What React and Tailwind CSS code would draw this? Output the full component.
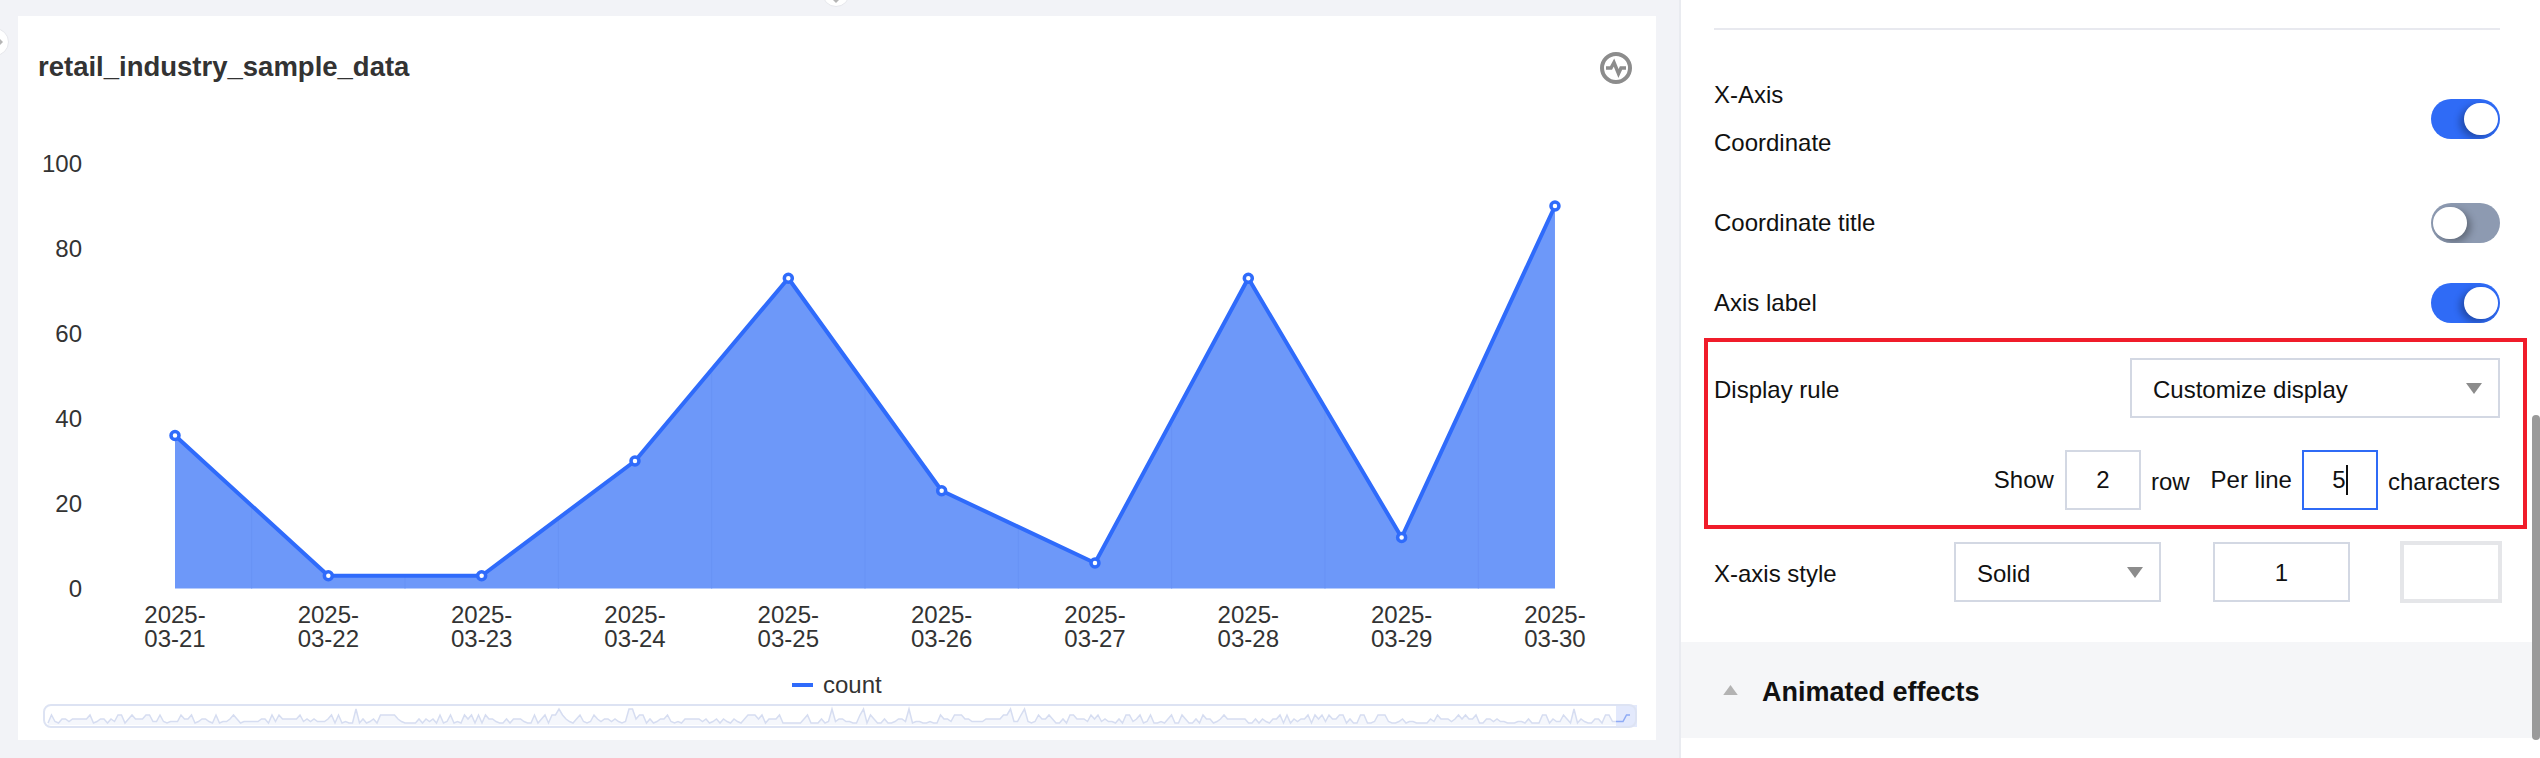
import { Fragment } from 'react';

const values = [36, 3, 3, 30, 73, 23, 6, 73, 12, 90];
const dates = ['03-21', '03-22', '03-23', '03-24', '03-25', '03-26', '03-27', '03-28', '03-29', '03-30'];
const xAt = i => 175 + i * 153.33;
const yAt = v => 588.5 - v * 4.25;
const linePoints = values.map((v, i) => `${xAt(i)},${yAt(v)}`).join(' ');
const areaPoints = `175,588.5 ${linePoints} 1555,588.5`;

// overview line in the data zoom strip
function buildSpark() {
  let seed = 7;
  const rand = () => {
    seed = (seed * 16807) % 2147483647;
    return seed / 2147483647;
  };
  const pts = [];
  for (let x = 48; x <= 1632; x += 3.5) {
    const r = rand();
    const h = r > 0.97 ? 15 : r > 0.8 ? 9 : r > 0.5 ? 5 : r > 0.25 ? 2.5 : 1;
    pts.push(`${x.toFixed(1)},${(724 - h).toFixed(1)}`);
  }
  return pts;
}
const spark = buildSpark();

function Chart() {
  return (
    <svg viewBox="18 100 1638 640" className="block w-[1638px] h-[640px]">
      <defs>
        <clipPath id="area-clip">
          <polygon points={areaPoints} />
        </clipPath>
      </defs>
      <g fontSize="24" fill="#333333" textAnchor="end">
        {[0, 20, 40, 60, 80, 100].map(v => (
          <text key={v} x="82" y={yAt(v) + 8}>{v}</text>
        ))}
      </g>
      <polygon points={areaPoints} fill="#6d98f9" />
      <g clipPath="url(#area-clip)" stroke="#6892f5" strokeWidth="1">
        {values.slice(1).map((_, i) => (
          <line key={i} x1={xAt(i) + 76.67} x2={xAt(i) + 76.67} y1="190" y2="589" />
        ))}
      </g>
      <polyline points={linePoints} fill="none" stroke="#2f6bfb" strokeWidth="4" strokeLinejoin="round" />
      {values.map((v, i) => (
        <circle key={i} cx={xAt(i)} cy={yAt(v)} r="4" fill="#ffffff" stroke="#2f6bfb" strokeWidth="3.5" />
      ))}
      <g fontSize="24" fill="#333333" textAnchor="middle">
        {dates.map((d, i) => (
          <Fragment key={d}>
            <text x={xAt(i)} y="623">2025-</text>
            <text x={xAt(i)} y="647">{d}</text>
          </Fragment>
        ))}
      </g>
      <rect x="792" y="683" width="21" height="4" fill="#2f6bfb" />
      <text x="823" y="693" fontSize="24" fill="#333333">count</text>

      {/* data zoom strip */}
      <polygon points={`48,725 ${spark.join(' ')} 1632,725`} fill="#f5f7fc" />
      <polyline points={spark.join(' ')} fill="none" stroke="#d6ddf1" strokeWidth="1.5" />
      <rect x="1616" y="705" width="21" height="22" fill="#e3e9fc" />
      <polyline points={spark.slice(-5).join(' ')} fill="none" stroke="#8fabf5" strokeWidth="1.5" />
      <rect x="44" y="705" width="1592" height="22" rx="7" fill="none" stroke="#dde3f3" strokeWidth="2" />
    </svg>
  );
}

function Toggle({ on }) {
  return (
    <div className={`w-[69px] h-[40px] rounded-[20px] flex items-center px-[2px] overflow-hidden ${on ? 'bg-[#2f6bf6] justify-end' : 'bg-[#8d9ab1] justify-start'}`}>
      <div className={`w-[34px] h-[32px] rounded-full bg-white ${on ? 'shadow-[-4px_3px_7px_rgba(0,0,0,0.3)]' : 'shadow-[4px_3px_7px_rgba(0,0,0,0.3)]'}`} />
    </div>
  );
}

function Caret({ className }) {
  return (
    <svg viewBox="0 0 16 11" className={className}>
      <polygon points="0,0 16,0 8,11" fill="#8c8c8c" />
    </svg>
  );
}

function Select({ value, className }) {
  return (
    <div className={`h-[60px] border-2 border-[#d3d8e3] flex items-center justify-between pl-[21px] pr-[16px] ${className}`}>
      <span className="mt-[3px]">{value}</span>
      <Caret className="w-[16px] h-[11px]" />
    </div>
  );
}

function NumberBox({ value, focused, className }) {
  return (
    <div className={`h-[60px] border-2 flex items-center justify-center ${focused ? 'border-[#2f6bf6]' : 'border-[#d3d8e3]'} ${className}`}>
      <span>{value}</span>
      {focused && <span className="w-[2px] h-[30px] bg-[#111111]" />}
    </div>
  );
}

function SwitchRow({ label, on }) {
  return (
    <div className="flex items-center justify-between h-[48px] leading-[48px] mt-[32px]">
      <span>{label}</span>
      <Toggle on={on} />
    </div>
  );
}

export default function App() {
  return (
    <div className="relative w-[2540px] h-[758px] overflow-hidden flex bg-[#f2f3f7] font-['Liberation_Sans','Arial',sans-serif] text-[24px] text-[#111111]">
      {/* collapse handles */}
      <div className="absolute left-[-19px] top-[28px] w-[28px] h-[28px] rounded-full bg-white border border-[#e6e7ec] flex items-center justify-end pr-[5px]">
        <div className="w-0 h-0 border-y-[5px] border-y-transparent border-l-[5px] border-l-[#b5b5b5]" />
      </div>
      <div className="absolute left-[822px] top-[-21px] w-[28px] h-[28px] rounded-full bg-white border border-[#e6e7ec] flex items-end justify-center pb-[3px]">
        <div className="w-0 h-0 border-x-[4px] border-x-transparent border-t-[4px] border-t-[#b5b5b5]" />
      </div>

      <div className="w-[1679px] shrink-0 pl-[18px] pt-[16px]">
        <div className="w-[1638px] h-[724px] bg-white">
          <div className="h-[84px] flex items-start justify-between pl-[20px] pr-[24px] pt-[35px]">
            <h1 className="text-[27.5px] leading-[32px] font-bold text-[#333333]">retail_industry_sample_data</h1>
            <svg viewBox="0 0 32 32" className="w-[32px] h-[32px] mt-[1px]">
              <circle cx="16" cy="16" r="14" fill="none" stroke="#8c8c8c" strokeWidth="4" />
              <polyline points="6,16 11,16 14,10.5 18.5,21.5 21,16 26,16" fill="none" stroke="#8c8c8c" strokeWidth="3.5" />
            </svg>
          </div>
          <Chart />
        </div>
      </div>

      <div className="relative flex-1 min-w-0 bg-white border-l-2 border-[#e9ebf0]">
        <div className="pl-[33px] pr-[40px] pt-[28px]">
          <div className="h-[2px] bg-[#e8e9ef]" />
          <div className="flex items-center justify-between mt-[41px]">
            <div className="leading-[48px]">
              <div>X-Axis</div>
              <div>Coordinate</div>
            </div>
            <Toggle on />
          </div>
          <SwitchRow label="Coordinate title" on={false} />
          <SwitchRow label="Axis label" on />

          {/* highlighted block */}
          <div className="mt-[11px] -ml-[10px] -mr-[27px] border-4 border-[#f01c2a] pl-[6px] pr-[23px] pt-[16px] pb-[15px]">
            <div className="flex items-center justify-between">
              <span className="mt-[3px]">Display rule</span>
              <Select value="Customize display" className="w-[370px]" />
            </div>
            <div className="flex items-center justify-end mt-[32px]">
              <span>Show</span>
              <NumberBox value="2" className="w-[76px] ml-[11px]" />
              <span className="ml-[10px] mt-[4px]">row</span>
              <span className="ml-[21px]">Per line</span>
              <NumberBox value="5" focused className="w-[76px] ml-[10px]" />
              <span className="ml-[10px] mt-[4px]">characters</span>
            </div>
          </div>

          <div className="flex items-center h-[60px] mt-[13px] -mr-[2px]">
            <span className="w-[240px] mt-[3px]">X-axis style</span>
            <Select value="Solid" className="w-[207px]" />
            <NumberBox value="1" className="w-[137px] ml-[52px] pt-[2px]" />
            <div className="w-[102px] h-[62px] ml-[50px] border-4 border-[#e5e6e9] bg-white" />
          </div>
        </div>

        <div className="mt-[40px] h-[96px] bg-[#f5f6f8] flex items-center pl-[42px]">
          <svg viewBox="0 0 16 11" className="w-[15px] h-[10px]">
            <polygon points="8,0 16,11 0,11" fill="#b3b3b3" />
          </svg>
          <span className="ml-[24px] mt-[4px] text-[27px] font-bold text-[#111111]">Animated effects</span>
        </div>

        {/* scrollbar thumb */}
        <div className="absolute right-0 top-[415px] w-[8px] h-[325px] rounded-[4px] bg-[#9a9a9a]" />
      </div>
    </div>
  );
}
